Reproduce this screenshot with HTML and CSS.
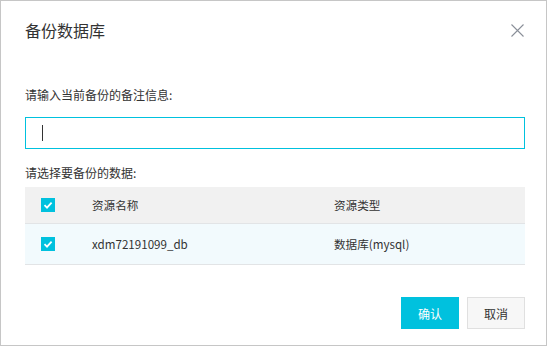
FILE: index.html
```html
<!DOCTYPE html>
<html lang="zh-CN">
<head>
<meta charset="utf-8">
<title>备份数据库</title>
<link rel="stylesheet" href="styles.css">
</head>
<body>
<div class="dialog">
  <div class="dialog-header">
    <h1 class="dialog-title">备份数据库</h1>
    <button class="close" aria-label="关闭">
      <svg width="13" height="13" viewBox="0 0 13 13"><path d="M0.5 0.5L12.5 12.5M12.5 0.5L0.5 12.5" stroke="#8a8f99" stroke-width="1.1" fill="none"/></svg>
    </button>
  </div>
  <label class="field-label">请输入当前备份的备注信息:</label>
  <div class="input"><span class="caret"></span></div>
  <div class="field-label second">请选择要备份的数据:</div>
  <div class="table">
    <div class="tr thead">
      <div class="td check"><span class="cb"><svg width="14" height="14" viewBox="0 0 14 14"><path d="M3.5 7.2L6 9.6L10.6 4.6" stroke="#fff" stroke-width="1.8" fill="none"/></svg></span></div>
      <div class="td name">资源名称</div>
      <div class="td type">资源类型</div>
    </div>
    <div class="tr row">
      <div class="td check"><span class="cb"><svg width="14" height="14" viewBox="0 0 14 14"><path d="M3.5 7.2L6 9.6L10.6 4.6" stroke="#fff" stroke-width="1.8" fill="none"/></svg></span></div>
      <div class="td name">xdm72191099_db</div>
      <div class="td type">数据库(mysql)</div>
    </div>
  </div>
  <div class="footer">
    <button class="btn primary">确认</button>
    <button class="btn">取消</button>
  </div>
</div>
</body>
</html>
```
FILE: styles.css
```css
* { box-sizing: border-box; }
html, body { margin: 0; padding: 0; background: #fff; }
body {
  font-family: "Noto Sans CJK SC", "Noto Sans", sans-serif;
  color: #333;
}
.dialog {
  width: 547px;
  height: 346px;
  border: 1px solid #c6c6c6;
  padding: 17px 21px 0 24px;
}
.dialog-header {
  display: flex;
  align-items: center;
  justify-content: space-between;
  height: 24px;
  padding-right: 1px;
}
.dialog-title {
  margin: 0;
  font-size: 16px;
  font-weight: normal;
  line-height: 24px;
  color: #333;
}
.close {
  border: 0;
  background: none;
  padding: 0;
  width: 13px;
  height: 13px;
  display: flex;
}
.field-label {
  display: block;
  font-size: 12px;
  line-height: 18px;
  margin-top: 44px;
  color: #333;
}
.field-label.second { margin-top: 15px; }
.input {
  margin-top: 13px;
  height: 32px;
  border: 1px solid #00c1de;
  display: flex;
  align-items: center;
  padding-left: 16px;
}
.caret {
  width: 1px;
  height: 16px;
  background: #333;
}
.table { margin-top: 5px; }
.tr {
  display: flex;
  align-items: center;
  border-bottom: 1px solid #e2e4e6;
  font-size: 11.6px;
}
.thead { height: 37px; background: #f1f1f1; }
.row { height: 41px; background: #f2fafd; }
.td.check { width: 67px; padding-left: 16px; display: flex; }
.td.name { width: 242px; }
.cb {
  width: 14px;
  height: 14px;
  background: #00c1de;
  display: flex;
}
.footer {
  display: flex;
  justify-content: flex-end;
  gap: 8px;
  margin-top: 32px;
}
.btn {
  font-family: inherit;
  font-size: 12px;
  height: 32px;
  width: 58px;
  border: 1px solid #e0e0e0;
  background: #f7f7f7;
  color: #333;
  padding: 0;
}
.btn.primary {
  background: #00c1de;
  border-color: #00c1de;
  color: #fff;
}
```
